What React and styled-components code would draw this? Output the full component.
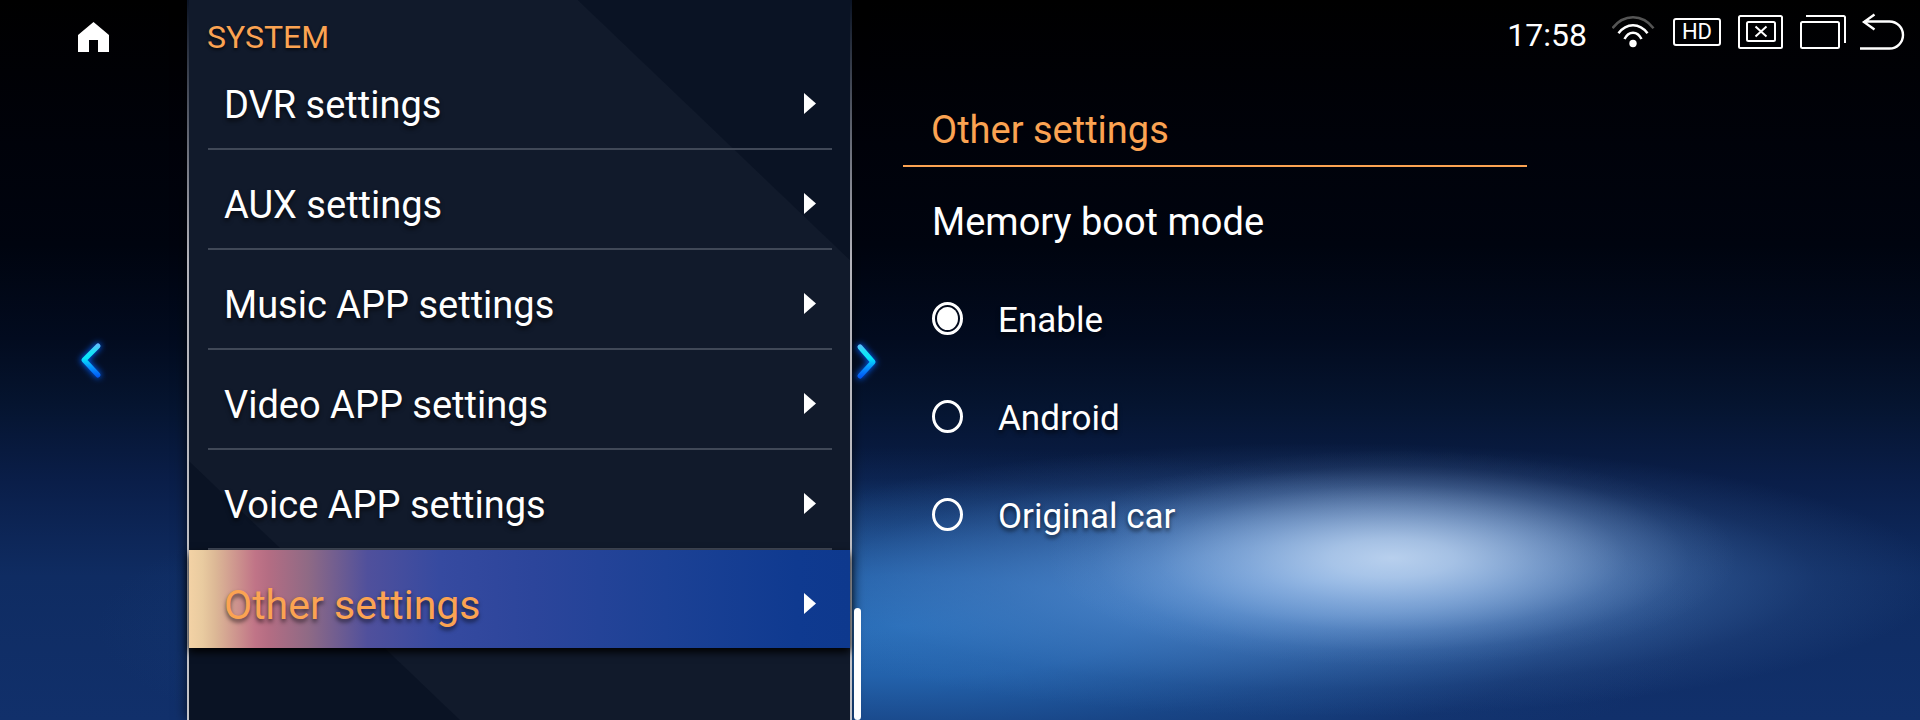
import React, { useState } from "react";
import styled, { createGlobalStyle } from "styled-components";

const accent = "#fba352";

const GlobalStyle = createGlobalStyle`
  *, *::before, *::after { box-sizing: border-box; }
  body {
    margin: 0;
    background: #000;
    color: #fff;
    font-family: Roboto, "Liberation Sans", sans-serif;
  }
  button { font: inherit; color: inherit; background: none; border: 0; padding: 0; cursor: pointer; }
  svg { display: block; }
`;

const Screen = styled.div`
  display: flex;
  min-height: 100vh;
  background:
    radial-gradient(ellipse 18% 15% at 72.500% 77.500%, rgba(208, 226, 248, 0.82), rgba(198, 219, 245, 0.74) 18%, rgba(182, 207, 240, 0.5) 42%, rgba(165, 195, 235, 0.2) 68%, rgba(150, 185, 230, 0.05) 86%, transparent),
    radial-gradient(ellipse 32% 19% at 69% 80.500%, rgba(98, 154, 222, 0.82), rgba(92, 147, 214, 0.7) 26%, rgba(84, 136, 202, 0.42) 54%, rgba(75, 122, 186, 0.14) 80%, transparent),
    radial-gradient(ellipse 42% 25% at 47% 87%, rgba(42, 118, 196, 0.9), rgba(40, 112, 190, 0.78) 28%, rgba(34, 98, 172, 0.42) 58%, rgba(30, 82, 148, 0.12) 82%, transparent),
    linear-gradient(#000 0%, #00020a 20%, #00040f 34%, #020b1f 47%, #05142f 56%, #0a1e49 67%, #0f2c62 80%, #11306b 100%);
`;

const Rail = styled.aside`
  flex: 0 0 187px;
  display: grid;
  grid-template-rows: 1fr auto 1fr;
  justify-items: center;
`;

const HomeButton = styled.button`
  align-self: start;
  margin-top: 22px;
`;

const Panel = styled.nav`
  flex: 0 0 665px;
  padding: 0 2px;
  background:
    linear-gradient(#0a1324, #b3b3ba 260px, #c4c4c8) left / 2px 100% no-repeat,
    linear-gradient(#0a1324, #b3b3ba 260px, #c4c4c8) right / 2px 100% no-repeat,
    linear-gradient(43.7deg, #0a1324 19.2%, #111a2b 19.3%, #111a2b 80.6%, #0a1324 80.7%);
  box-shadow: 0 0 12px rgba(0, 0, 0, 0.7);
`;

const PanelTitle = styled.h1`
  margin: 0;
  padding: 24px 18px 0;
  font-size: 32px;
  line-height: 26px;
  font-weight: 400;
  color: ${accent};
  text-shadow: 0 2px 3px rgba(0, 0, 0, 0.6);
`;

const Menu = styled.ul`
  list-style: none;
  margin: 0;
  padding: 0;
`;

const MenuItem = styled.li`
  height: 100px;
  padding: ${(p) => (p.$selected ? "0" : "0 18px 0 19px")};
`;

const MenuButton = styled.button`
  display: flex;
  align-items: center;
  justify-content: space-between;
  width: 100%;
  height: ${(p) => (p.$selected ? "98px" : "100px")};
  padding: ${(p) => (p.$selected ? "8px 34px 0 35px" : "8px 16px 0")};
  border-bottom: ${(p) => (p.$selected ? "0" : "2px solid #404857")};
  text-align: left;
  font-size: ${(p) => (p.$selected ? "41px" : "38px")};
  color: ${(p) => (p.$selected ? accent : "#fff")};
  text-shadow: 0 3px 4px rgba(0, 0, 0, 0.6);
  ${(p) =>
    p.$selected &&
    `
    background: linear-gradient(90deg, #f3d2a5 0%, #e9cba0 2%, #dcb896 4%, #c07487 10%, #b46d83 12%, #8f6a85 18%, #50509c 27%, #364aa0 38%, #2c459b 52%, #1c4195 72%, #0f3a90 92%, #0e398e 100%);
    box-shadow: 0 4px 8px #000;
  `}

  span { padding-top: 4px; }
`;

const Gutter = styled.div`
  flex: 0 0 30px;
  display: grid;
  grid-template-rows: 1fr auto 1fr;
`;

const ChevronButton = styled.button`
  grid-row: 2;
  justify-self: center;
`;

const ScrollThumb = styled.div`
  grid-row: 3;
  align-self: end;
  width: 7px;
  height: 112px;
  margin-left: 2px;
  border-radius: 4px;
  background: #fff;
`;

const Detail = styled.main`
  flex: 1;
  min-width: 0;
`;

const StatusBar = styled.header`
  display: flex;
  align-items: center;
  justify-content: flex-end;
  gap: 17px;
  height: 64px;
  padding-right: 15px;
`;

const Clock = styled.time`
  margin-right: 8px;
  padding-top: 6px;
  font-size: 32px;
  line-height: 38px;
`;

const HdBadge = styled.span`
  display: flex;
  align-items: center;
  justify-content: center;
  width: 48px;
  height: 28px;
  border: 2px solid #fff;
  border-radius: 3px;
  font-size: 22px;
  line-height: 24px;
`;

const Section = styled.section`
  padding: 38px 21px 0;
`;

const SectionTitle = styled.h2`
  max-width: 624px;
  margin: 0;
  padding: 3px 28px 10px;
  border-bottom: 2px solid ${accent};
  font-size: 38px;
  line-height: 50px;
  font-weight: 400;
  color: ${accent};
`;

const Options = styled.fieldset`
  margin: 0;
  padding: 30px 29px 0;
  border: 0;
`;

const Legend = styled.legend`
  float: left;
  width: 100%;
  margin-bottom: 22px;
  padding: 0;
  font-size: 38px;
  line-height: 50px;
`;

const Option = styled.label`
  clear: both;
  display: flex;
  align-items: center;
  gap: 35px;
  height: 98px;
  font-size: 35px;
  text-shadow: 0 3px 4px rgba(0, 0, 0, 0.6);
  cursor: pointer;

  span { padding-top: 4px; }
`;

const Radio = styled.input`
  appearance: none;
  width: 31px;
  height: 33px;
  margin: 0;
  padding: 2px;
  border: 3px solid #fff;
  border-radius: 50%;

  &:checked { background: #fff content-box; }
`;

const HomeIcon = () => (
  <svg width="31" height="30" viewBox="0 0 31 30" fill="#fff">
    <path d="M15.500 0 31 13v17H20V18h-9v12H0V13z" />
  </svg>
);

const Arrow = () => (
  <svg width="12" height="21" viewBox="0 0 12 21" fill="#fff">
    <path d="M0 0 12 10.500 0 21z" />
  </svg>
);

const Chevron = ({ id, points }) => (
  <svg width="30" height="46" viewBox="0 0 30 46" fill="none" overflow="visible">
    <defs>
      <linearGradient id={id} gradientUnits="userSpaceOnUse" x1="0" y1="6" x2="0" y2="40">
        <stop offset="0" stopColor="#6fb4ff" />
        <stop offset="0.250" stopColor="#1fe0f5" />
        <stop offset="0.450" stopColor="#05e6fa" />
        <stop offset="0.700" stopColor="#0899ff" />
        <stop offset="1" stopColor="#0058f5" />
      </linearGradient>
      <filter id={`${id}-glow`} x="-100%" y="-50%" width="300%" height="200%">
        <feGaussianBlur stdDeviation="3" />
      </filter>
    </defs>
    <polyline points={points} stroke="#0060ff" strokeWidth="6" strokeLinecap="round" filter={`url(#${id}-glow)`} />
    <polyline points={points} stroke={`url(#${id})`} strokeWidth="5" strokeLinecap="round" strokeLinejoin="round" />
  </svg>
);

const WifiIcon = () => (
  <svg width="44" height="34" viewBox="0 0 44 34" fill="none" stroke="#fff" strokeWidth="2.500">
    <path d="M0.500 13.200C11.500-1.500 30.500-1.500 41.500 13.200" stroke="#555" />
    <path d="M6.500 18.200C14.500 7.500 27.500 7.500 35.500 18.200" />
    <path d="M12.500 24C16.500 15.500 25.500 15.500 29.500 24" />
    <circle cx="21" cy="28.500" r="3.700" fill="#fff" stroke="none" />
  </svg>
);

const CloseScreenIcon = () => (
  <svg width="45" height="34" viewBox="0 0 45 34" fill="none" stroke="#fff" strokeWidth="2">
    <rect x="1" y="1" width="43" height="32" rx="1.500" />
    <rect x="9" y="7" width="28" height="19" rx="1.500" />
    <path d="m17.500 11.500 11 10M28.500 11.500l-11 10" />
  </svg>
);

const WindowsIcon = () => (
  <svg width="46" height="34" viewBox="0 0 46 34" fill="none" stroke="#fff" strokeWidth="2">
    <rect x="1" y="7" width="38" height="26" rx="1.500" />
    <path d="M6 1h37.500Q45 1 45 2.500V28" />
  </svg>
);

const BackIcon = () => (
  <svg width="42" height="36" viewBox="3 0 42 36" overflow="visible" fill="none" stroke="#fff" strokeWidth="2.400">
    <path d="M14.500 0.500 4 8l10.500 7.500M4 7.500h25.500a13.500 13.500 0 0 1 0 27H0" />
  </svg>
);

const menuItems = [
  "DVR settings",
  "AUX settings",
  "Music APP settings",
  "Video APP settings",
  "Voice APP settings",
  "Other settings",
];

const bootModes = ["Enable", "Android", "Original car"];

export default function App() {
  const [page, setPage] = useState("Other settings");
  const [mode, setMode] = useState("Enable");

  return (
    <>
      <GlobalStyle />
      <Screen>
        <Rail>
          <HomeButton aria-label="Home">
            <HomeIcon />
          </HomeButton>
          <ChevronButton aria-label="Previous">
            <Chevron id="chevron-left" points="19,9 5,23 19,38" />
          </ChevronButton>
        </Rail>
        <Panel>
          <PanelTitle>SYSTEM</PanelTitle>
          <Menu>
            {menuItems.map((name) => (
              <MenuItem key={name} $selected={name === page}>
                <MenuButton $selected={name === page} onClick={() => setPage(name)}>
                  <span>{name}</span>
                  <Arrow />
                </MenuButton>
              </MenuItem>
            ))}
          </Menu>
        </Panel>
        <Gutter>
          <ChevronButton aria-label="Next">
            <Chevron id="chevron-right" points="8,10 21,25 8,39" />
          </ChevronButton>
          <ScrollThumb />
        </Gutter>
        <Detail>
          <StatusBar>
            <Clock>17:58</Clock>
            <WifiIcon />
            <HdBadge>HD</HdBadge>
            <CloseScreenIcon />
            <WindowsIcon />
            <BackIcon />
          </StatusBar>
          <Section>
            <SectionTitle>{page}</SectionTitle>
            <Options>
              <Legend>Memory boot mode</Legend>
              {bootModes.map((name) => (
                <Option key={name}>
                  <Radio
                    type="radio"
                    name="boot-mode"
                    checked={mode === name}
                    onChange={() => setMode(name)}
                  />
                  <span>{name}</span>
                </Option>
              ))}
            </Options>
          </Section>
        </Detail>
      </Screen>
    </>
  );
}
